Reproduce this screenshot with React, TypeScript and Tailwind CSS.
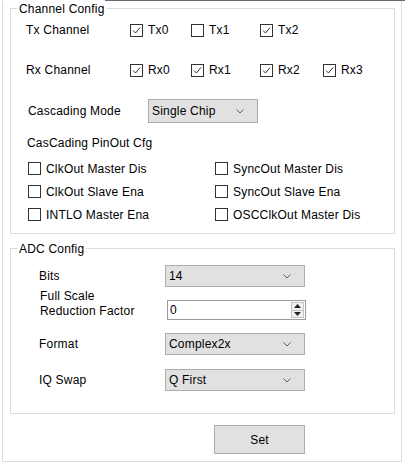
import React from 'react';

const CheckBox: React.FC<{ label: string; checked?: boolean }> = ({ label, checked }) => (
  <div className="flex items-center h-[14px]">
    <span className="w-[13px] h-[13px] border border-[#333333] bg-white flex items-center justify-center">
      {checked && (
        <svg width="11" height="11" viewBox="0 0 11 11">
          <path d="M2 5.5 L4.5 8 L9 2.5" fill="none" stroke="#333333" strokeWidth="1" />
        </svg>
      )}
    </span>
    <span className="ml-[5px] leading-[14px]">{label}</span>
  </div>
);

const Chevron = () => (
  <svg width="8" height="5" viewBox="0 0 8 5">
    <path d="M0.5 0.5 L4 4 L7.5 0.5" fill="none" stroke="#606060" strokeWidth="1" />
  </svg>
);

const Select: React.FC<{ value: string; className: string }> = ({ value, className }) => (
  <div className={`flex items-center justify-between bg-[#e1e1e1] border border-[#adadad] pl-[3px] pr-[13px] ${className}`}>
    <span className="leading-[14px]">{value}</span>
    <Chevron />
  </div>
);

const GroupBox: React.FC<{ title: string; className: string; children: React.ReactNode }> = ({ title, className, children }) => (
  <div className={`relative w-[385px] border border-[#dcdcdc] ${className}`}>
    <span className="absolute left-[6px] top-[-7px] bg-white px-[2px] leading-[14px]">{title}</span>
    {children}
  </div>
);

export default function App() {
  return (
    <div className="w-[405px] h-[469px] bg-white text-[12px] tracking-[0.2px] text-black font-['Liberation_Sans',Arial,sans-serif]">
      {/* top edge of the host panel */}
      <div className="h-[1px] ml-[105px] bg-[#6b6b6b]" />

      <div className="ml-[2px] w-[400px] h-[461px] border-x border-b border-[#dcdcdc] pl-[7px] pt-[7px]">
        {/* Channel Config */}
        <GroupBox title="Channel Config" className="h-[226px]">
          <div className="pt-[14px] pl-[15px]">
            <div className="flex items-center h-[14px]">
              <span className="w-[104px]">Tx Channel</span>
              <div className="w-[61px]"><CheckBox checked label="Tx0" /></div>
              <div className="w-[69px]"><CheckBox label="Tx1" /></div>
              <CheckBox checked label="Tx2" />
            </div>

            <div className="flex items-center h-[14px] mt-[26px]">
              <span className="w-[104px]">Rx Channel</span>
              <div className="w-[61px]"><CheckBox checked label="Rx0" /></div>
              <div className="w-[69px]"><CheckBox checked label="Rx1" /></div>
              <div className="w-[63px]"><CheckBox checked label="Rx2" /></div>
              <CheckBox checked label="Rx3" />
            </div>

            <div className="flex items-center h-[24px] mt-[22px]">
              <span className="ml-[2px] w-[120px]">Cascading Mode</span>
              <Select value="Single Chip" className="w-[110px] h-[24px]" />
            </div>

            <div className="ml-[1px] mt-[13px] h-[14px] leading-[14px]">CasCading PinOut Cfg</div>

            <div className="ml-[2px] mt-[7px] grid grid-cols-[187px_auto]">
              <div className="h-[23px] flex items-center"><CheckBox label="ClkOut Master Dis" /></div>
              <div className="h-[23px] flex items-center"><CheckBox label="SyncOut Master Dis" /></div>
              <div className="h-[23px] flex items-center"><CheckBox label="ClkOut Slave Ena" /></div>
              <div className="h-[23px] flex items-center"><CheckBox label="SyncOut Slave Ena" /></div>
              <div className="h-[23px] flex items-center"><CheckBox label="INTLO Master Ena" /></div>
              <div className="h-[23px] flex items-center"><CheckBox label="OSCClkOut Master Dis" /></div>
            </div>
          </div>
        </GroupBox>

        {/* ADC Config */}
        <GroupBox title="ADC Config" className="h-[166px] mt-[14px]">
          <div className="pl-[28px] pt-[16px]">
            <div className="flex items-center h-[22px]">
              <span className="w-[126px]">Bits</span>
              <Select value="14" className="w-[140px] h-[22px]" />
            </div>

            <div className="flex items-start mt-[2px]">
              <div className="w-[126px] pl-[1px] leading-[15px]">
                Full Scale
                <br />
                Reduction Factor
              </div>
              <div className="mt-[11px] ml-[2px] w-[139px] h-[20px] border border-[#9a9a9a] bg-white flex items-center pl-[2px] pr-[1px]">
                <span className="flex-1 leading-[14px]">0</span>
                <div className="w-[13px] h-[16px] flex flex-col border border-[#c4c4c4] bg-[#f0f0f0]">
                  <div className="flex-1 flex items-center justify-center border-b border-[#c4c4c4]">
                    <svg width="7" height="4" viewBox="0 0 7 4"><path d="M0 4 L3.5 0 L7 4 Z" fill="#222222" /></svg>
                  </div>
                  <div className="flex-1 flex items-center justify-center">
                    <svg width="7" height="4" viewBox="0 0 7 4"><path d="M0 0 L3.5 4 L7 0 Z" fill="#222222" /></svg>
                  </div>
                </div>
              </div>
            </div>

            <div className="flex items-center h-[22px] mt-[13px]">
              <span className="w-[126px]">Format</span>
              <Select value="Complex2x" className="w-[140px] h-[22px]" />
            </div>

            <div className="flex items-center h-[22px] mt-[14px]">
              <span className="w-[126px]">IQ Swap</span>
              <Select value="Q First" className="w-[140px] h-[22px]" />
            </div>
          </div>
        </GroupBox>

        <button className="mt-[11px] ml-[204px] w-[91px] h-[29px] bg-[#e1e1e1] border border-[#adadad] flex items-center justify-center">
          Set
        </button>
      </div>
    </div>
  );
}
